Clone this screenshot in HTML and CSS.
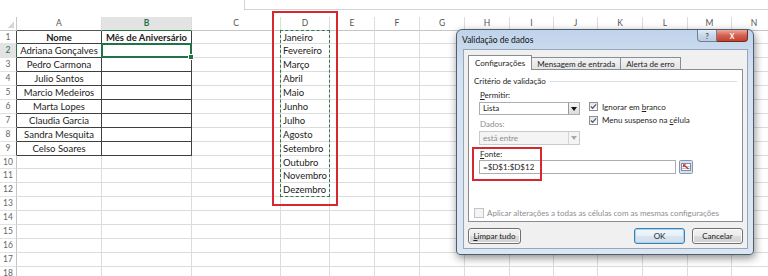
FILE: index.html
```html
<!DOCTYPE html>
<html lang="pt">
<head>
    <meta charset="UTF-8">
    <title>Validação de dados</title>
    <link rel="stylesheet" href="styles.css">
</head>
<body>

    <div class="formula-area">
        <div class="formula-box"></div>
    </div>

    <div class="sheet-wrap">
        <div class="sheet" id="sheet"></div>
        <div class="sheet-overlay">
            <div class="copy-range"></div>
            <div class="active-cell"></div>
            <div class="red-box"></div>
        </div>
    </div>

    <div class="dialog">
        <div class="titlebar">
            <span class="title">Validação de dados</span>
            <div class="caption-btns">
                <span class="cap-help">?</span>
                <span class="cap-close">X</span>
            </div>
        </div>

        <div class="client">
            <div class="tabs">
                <span class="tab active">Configurações</span>
                <span class="tab">Mensagem de entrada</span>
                <span class="tab">Alerta de erro</span>
            </div>

            <div class="panel">
                <div class="group-title"><span>Critério de validação</span></div>

                <div class="criteria">
                    <div class="left-col">
                        <div class="label"><u>P</u>ermitir:</div>
                        <div class="select">
                            <span class="select-text">Lista</span>
                            <span class="select-btn">
                                <svg width="6" height="4" viewBox="0 0 6 4"><path d="M0 0h6L3 4z" fill="#111"></path></svg>
                            </span>
                        </div>
                        <div class="label disabled">Dados:</div>
                        <div class="select disabled">
                            <span class="select-text">está entre</span>
                            <span class="select-btn">
                                <svg width="6" height="4" viewBox="0 0 6 4"><path d="M0 0h6L3 4z" fill="#a8a8a8"></path></svg>
                            </span>
                        </div>
                    </div>

                    <div class="checks">
                        <div class="check">
                            <span class="box">
                                <svg width="8" height="7" viewBox="0 0 8 7"><path d="M1 3.5l2 2L7 1" fill="none" stroke="#4b5d86" stroke-width="1.4"></path></svg>
                            </span>
                            <span>Ignorar em <u>b</u>ranco</span>
                        </div>
                        <div class="check">
                            <span class="box">
                                <svg width="8" height="7" viewBox="0 0 8 7"><path d="M1 3.5l2 2L7 1" fill="none" stroke="#4b5d86" stroke-width="1.4"></path></svg>
                            </span>
                            <span>Menu suspenso na <u>c</u>élula</span>
                        </div>
                    </div>
                </div>

                <div class="label fonte"><u>F</u>onte:</div>
                <div class="source-row">
                    <div class="source-input">=$D$1:$D$12</div>
                    <span class="range-btn">
                        <svg width="14" height="14" viewBox="0 0 14 14">
                            <rect x="0.5" y="0.5" width="13" height="13" rx="1" fill="#d6e2f0" stroke="#8596ad"></rect>
                            <rect x="2.5" y="3.5" width="9" height="7" fill="#fff" stroke="#7d8ca3"></rect>
                            <path d="M3 6.5h8M3 8.5h8" stroke="#b9c4d3"></path>
                            <path d="M9.5 9L5 5.2" stroke="#d42a2a" stroke-width="1.4"></path>
                            <path d="M4 4.2h3.2L4 7.4z" fill="#d42a2a"></path>
                        </svg>
                    </span>
                </div>

                <div class="check apply">
                    <span class="box empty"></span>
                    <span>Aplicar alterações a todas as células com as mesmas configurações</span>
                </div>
            </div>

            <div class="buttons">
                <button class="btn btn-clear"><u>L</u>impar tudo</button>
                <button class="btn btn-ok">OK</button>
                <button class="btn btn-cancel">Cancelar</button>
            </div>
        </div>

        <div class="source-mark"></div>
    </div>

    <script>
        const cols = 'ABCDEFGHIJKLMN'.split('');
        const names = ['Adriana Gonçalves', 'Pedro Carmona', 'Julio Santos', 'Marcio Medeiros',
            'Marta Lopes', 'Claudia Garcia', 'Sandra Mesquita', 'Celso Soares'];
        const months = ['Janeiro', 'Fevereiro', 'Março', 'Abril', 'Maio', 'Junho', 'Julho',
            'Agosto', 'Setembro', 'Outubro', 'Novembro', 'Dezembro'];
        const sheet = document.getElementById('sheet');

        function addCell(className, text) {
            const cell = document.createElement('div');
            cell.className = className;
            cell.textContent = text || '';
            sheet.appendChild(cell);
        }

        addCell('corner');
        cols.forEach(col => {
            let cls = 'col-head';
            if (col === 'A' || col === 'B') cls += ' edge';
            if (col === 'B') cls += ' active';
            addCell(cls, col);
        });

        for (let row = 1; row <= 18; row++) {
            let head = 'row-head';
            if (row <= 9) head += ' edge';
            if (row === 2) head += ' active';
            addCell(head, row);

            cols.forEach(col => {
                let cls = 'cell';
                let text = '';
                const inTable = (col === 'A' || col === 'B') && row <= 9;
                if (inTable) cls += ' tbl center';
                if (inTable && row === 1) cls += ' bold';
                if (col === 'A' && row === 1) text = 'Nome';
                if (col === 'B' && row === 1) text = 'Mês de Aniversário';
                if (col === 'A' && row > 1 && row <= 9) text = names[row - 2];
                if (col === 'D' && row <= 12) text = months[row - 1];
                addCell(cls, text);
            });
        }
    </script>

</body>
</html>
```

FILE: styles.css
```css
body {
    margin: 0;
    width: 768px;
    height: 276px;
    overflow: hidden;
    position: relative;
    background-color: #ffffff;
    font-family: Lato, "Open Sans", sans-serif;
    color: #222;
}

/* Formula bar edge */
.formula-area {
    height: 17px;
}

.formula-box {
    margin-left: 244px;
    height: 10px;
    box-sizing: border-box;
    border-left: 1px solid #d4d4d4;
    border-bottom: 1px solid #d4d4d4;
}

/* Spreadsheet grid */
.sheet-wrap {
    position: relative;
}

.sheet,
.sheet-overlay {
    display: grid;
    grid-template-columns: 17px 85px 90px 89px 49px 45px 45px 45px 45px 44px 44px 45px 45px 44px 45px;
    grid-template-rows: 13.5px repeat(18, 13.9px);
}

.sheet {
    font-size: 9.5px;
}

.sheet > div {
    box-sizing: border-box;
    white-space: nowrap;
}

.corner {
    border-right: 1px solid #c6c6c6;
    border-bottom: 1px solid #c6c6c6;
    background: linear-gradient(to top left, #d6d6d6 50%, transparent 50%) no-repeat right 2px bottom 2px / 7px 7px;
}

.col-head {
    text-align: center;
    font-size: 8.5px;
    line-height: 13px;
    color: #555;
    border-right: 1px solid #dcdcdc;
    border-bottom: 1px solid #c6c6c6;
}

.col-head.edge {
    border-bottom-color: #555;
}

.col-head.active {
    background-color: #e3e3e3;
    color: #217346;
    font-weight: bold;
    border-bottom-color: #217346;
}

.row-head {
    text-align: center;
    font-size: 8.5px;
    line-height: 13px;
    color: #666;
    border-right: 1px solid #c6c6c6;
    border-bottom: 1px solid #e2e2e2;
}

.row-head.edge {
    border-right-color: #444;
}

.row-head.active {
    background-color: #e3e3e3;
    color: #217346;
    border-right-color: #217346;
}

.cell {
    padding: 0 2px;
    line-height: 13px;
    border-right: 1px solid #dcdcdc;
    border-bottom: 1px solid #dcdcdc;
}

.cell.tbl {
    border-color: #3f3f3f;
}

.cell.center {
    text-align: center;
}

.cell.bold {
    font-weight: bold;
}

/* Selection marks lying over the grid */
.sheet-overlay {
    position: absolute;
    top: 0;
    left: 0;
    pointer-events: none;
}

.copy-range {
    grid-row: 2 / 14;
    grid-column: 5 / 6;
    margin: -1px 0 0 -1px;
    border: 1.5px dashed #2f7a4b;
}

.active-cell {
    grid-row: 3 / 4;
    grid-column: 3 / 4;
    margin: -1px 0 0 -1px;
    border: 2px solid #217346;
    position: relative;
}

.active-cell::after {
    content: "";
    position: absolute;
    right: -4px;
    bottom: -4px;
    width: 4px;
    height: 4px;
    background-color: #217346;
    border: 1px solid #fff;
}

.red-box {
    grid-row: 1 / 14;
    grid-column: 5 / 6;
    margin: -6px -8px -9px -9px;
    border: 2px solid #d7282f;
}

/* Data validation dialog */
.dialog {
    position: absolute;
    left: 456px;
    top: 29px;
    width: 298px;
    height: 226px;
    box-sizing: border-box;
    display: flex;
    flex-direction: column;
    border: 1px solid #4e5d70;
    border-radius: 6px 6px 4px 4px;
    background: linear-gradient(#bfd3ea, #d5e2f1 40px, #dbe6f3);
    box-shadow: 1px 3px 8px rgba(0, 0, 0, 0.45);
    font-size: 8px;
    color: #1e1e1e;
}

.titlebar {
    height: 20px;
    display: flex;
    justify-content: space-between;
    align-items: center;
    padding-left: 5px;
}

.title {
    font-size: 8.5px;
    color: #111;
}

.caption-btns {
    align-self: flex-start;
    display: flex;
    margin-right: 5px;
}

.caption-btns span {
    height: 12px;
    box-sizing: border-box;
    display: flex;
    align-items: center;
    justify-content: center;
    font-size: 7px;
    font-weight: bold;
}

.cap-help {
    width: 20px;
    border: 1px solid #6f7f94;
    border-top: none;
    border-radius: 0 0 0 4px;
    background: linear-gradient(#e3ecf6, #c9d7e8 50%, #b9cbe1);
    color: #3d4c60;
}

.cap-close {
    width: 31px;
    border: 1px solid #6e2b22;
    border-top: none;
    border-left: none;
    border-radius: 0 0 4px 0;
    background: linear-gradient(#e9a99b, #d4604e 50%, #c5412f);
    color: #fff;
}

.client {
    flex: 1;
    margin: 0 5px 5px 6px;
    padding: 5px 4px 4px 4px;
    display: flex;
    flex-direction: column;
    background-color: #f0f0f0;
    border: 1px solid #97a7bb;
    box-sizing: border-box;
}

.tabs {
    height: 15px;
    display: flex;
    align-items: flex-end;
    margin-bottom: -1px;
}

.tab {
    height: 13px;
    box-sizing: border-box;
    padding: 0 5px;
    line-height: 12px;
    border: 1px solid #898c95;
    border-bottom: none;
    margin-left: -1px;
    background: linear-gradient(#f3f3f3, #e2e2e2);
}

.tab.active {
    height: 15px;
    line-height: 14px;
    margin-left: 0;
    padding: 0 6px;
    background: #fff;
    position: relative;
    z-index: 1;
}

.panel {
    height: 153px;
    box-sizing: border-box;
    padding: 6px 5px 0 5px;
    border: 1px solid #898c95;
    background-color: #fff;
}

.group-title {
    display: flex;
    align-items: center;
    gap: 4px;
    line-height: 10px;
}

.group-title::after {
    content: "";
    flex: 1;
    height: 1px;
    background-color: #d5dfe5;
}

.criteria {
    display: flex;
    margin-left: 5px;
}

.left-col {
    width: 101px;
}

.label {
    line-height: 10px;
    margin-top: 4px;
    padding-left: 1px;
}

.label.disabled {
    color: #8d8d8d;
}

.select {
    height: 13px;
    box-sizing: border-box;
    margin-top: 2px;
    display: flex;
    border: 1px solid #abadb3;
    background-color: #fff;
}

.select.disabled {
    height: 14px;
    margin-top: 2px;
    border-color: #cacaca;
    background-color: #f4f4f4;
    color: #8d8d8d;
}

.select-text {
    flex: 1;
    padding-left: 3px;
    line-height: 11px;
}

.select.disabled .select-text {
    line-height: 12px;
}

.select-btn {
    width: 10px;
    display: flex;
    align-items: center;
    justify-content: center;
    border-left: 1px solid #9a9a9a;
    background: linear-gradient(#f4f4f4, #dcdcdc);
}

.select.disabled .select-btn {
    border-left-color: #d4d4d4;
    background: #f4f4f4;
}

.checks {
    margin-left: 9px;
    padding-top: 14px;
}

.check {
    height: 13.5px;
    display: flex;
    align-items: center;
    gap: 4px;
}

.box {
    width: 9px;
    height: 9px;
    box-sizing: border-box;
    display: flex;
    align-items: center;
    justify-content: center;
    border: 1px solid #8f8f8f;
    background: linear-gradient(#e6e6e6, #fbfbfb);
}

.fonte {
    margin-left: 5px;
}

.source-row {
    margin: 1px 0 0 5px;
    display: flex;
    align-items: center;
    gap: 3px;
}

.source-input {
    width: 197px;
    height: 14px;
    box-sizing: border-box;
    padding-left: 3px;
    line-height: 12px;
    border: 1px solid #abadb3;
}

.range-btn {
    display: flex;
}

.check.apply {
    margin-top: 32px;
    color: #8d8d8d;
    gap: 3px;
}

.box.empty {
    width: 10px;
    height: 10px;
    border-color: #c4c4c4;
    background: #f4f4f4;
}

.buttons {
    margin-top: 6px;
    display: flex;
    gap: 7px;
}

.btn {
    height: 16px;
    width: 51px;
    padding: 0;
    font-family: inherit;
    font-size: 8px;
    color: #1e1e1e;
    border: 1px solid #707070;
    border-radius: 3px;
    background: linear-gradient(#f2f2f2, #ebebeb 50%, #dddddd 50%, #cfcfcf);
    box-shadow: inset 0 0 0 1px #fbfbfb;
}

.btn-clear {
    width: 53px;
    margin-right: auto;
}

.btn-ok {
    border-color: #3c7fb1;
    background: linear-gradient(#f3f8fc, #e6eff7 50%, #d9e5f0 50%, #cfdeea);
    box-shadow: inset 0 0 0 1px #a8d2f0;
}

/* Red mark round the source field */
.source-mark {
    position: absolute;
    left: 15px;
    top: 117px;
    width: 70px;
    height: 34px;
    box-sizing: border-box;
    border: 2px solid #d7282f;
}
```
